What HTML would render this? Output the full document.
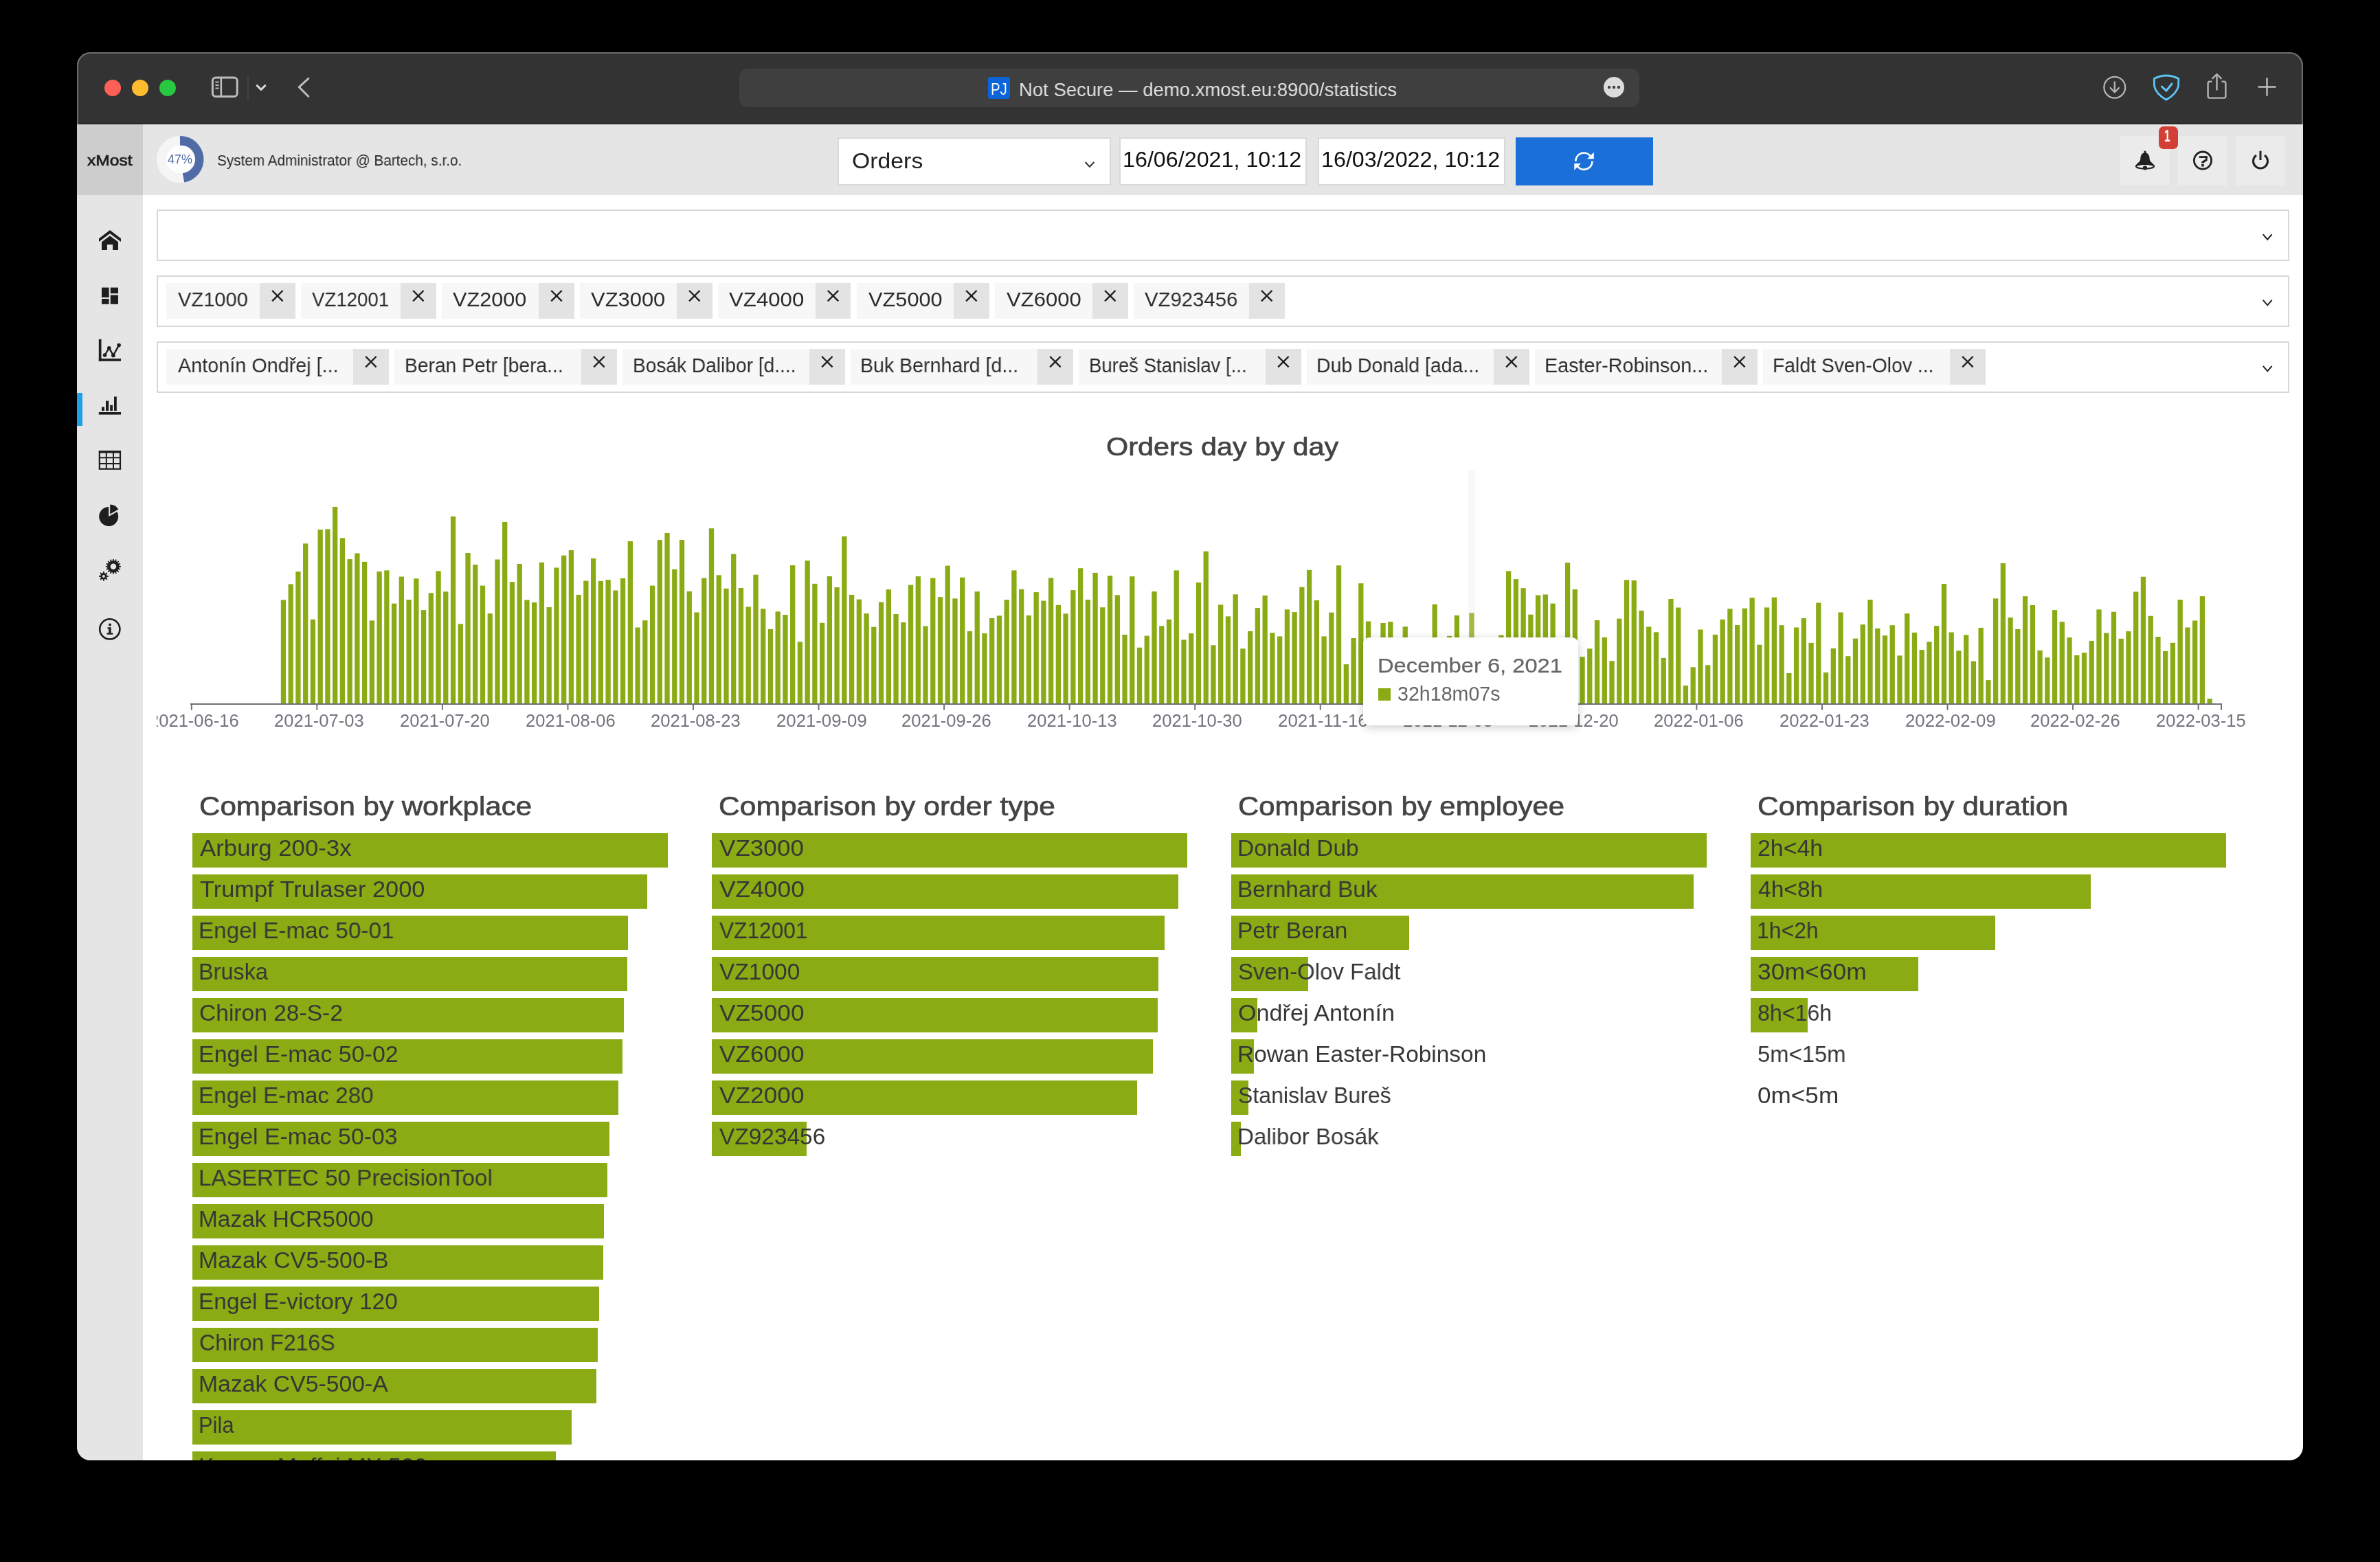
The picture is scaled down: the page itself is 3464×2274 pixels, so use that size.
<!DOCTYPE html><html><head><meta charset="utf-8"><title>xMost statistics</title><style>html,body{margin:0;padding:0;background:#000;width:3464px;height:2274px;overflow:hidden;}#win{position:absolute;left:0;top:0;width:3464px;height:2274px;clip-path:inset(76px 112px 148px 112px round 20px);background:#fff;}.t{position:absolute;white-space:pre;line-height:1;transform-origin:0 0;font-family:"Liberation Sans",sans-serif;-webkit-font-smoothing:antialiased;will-change:transform;}</style></head><body><div id="win"><div style="position:absolute;left:112.00px;top:76.00px;width:3240.00px;height:104.00px;background:#333333;"></div>
<div style="position:absolute;left:112.00px;top:180.00px;width:3240.00px;height:1.00px;background:#0c0c0c;"></div>
<div style="position:absolute;left:112px;top:76px;width:3240px;height:120px;box-sizing:border-box;border:2px solid #6d6d6d;border-bottom:none;border-radius:20px 20px 0 0;"></div>
<svg style="position:absolute;left:0;top:0" width="3464" height="200" viewBox="0 0 3464 200"><circle cx="164" cy="128" r="12" fill="#fe5f57"/><circle cx="204" cy="128" r="12" fill="#febc2e"/><circle cx="244" cy="128" r="12" fill="#28c840"/><rect x="309.4" y="113.1" width="35.8" height="27.4" rx="4.5" ry="4.5" fill="none" stroke="#bdbdbd" stroke-width="3"/><line x1="321.8" y1="113" x2="321.8" y2="141" stroke="#bdbdbd" stroke-width="2.6"/><line x1="313.5" y1="119.5" x2="318.5" y2="119.5" stroke="#bdbdbd" stroke-width="2.2"/><line x1="313.5" y1="124" x2="318.5" y2="124" stroke="#bdbdbd" stroke-width="2.2"/><line x1="313.5" y1="128.5" x2="318.5" y2="128.5" stroke="#bdbdbd" stroke-width="2.2"/><line x1="361" y1="110" x2="361" y2="146" stroke="#484848" stroke-width="1.5"/><polyline points="374.2,124.6 380,130.4 385.8,124.6" fill="none" stroke="#d6d6d6" stroke-width="3" stroke-linecap="round" stroke-linejoin="round"/><polyline points="448.8,114.3 435.2,126.8 448.8,140.2" fill="none" stroke="#bdbdbd" stroke-width="3" stroke-linecap="round" stroke-linejoin="round"/><rect x="1076" y="100" width="1310" height="56" rx="12" ry="12" fill="#3f3f3f"/><rect x="1438" y="112" width="32" height="32" rx="4" ry="4" fill="#0b64d8"/><circle cx="2349" cy="127" r="15" fill="#dcdcdc"/><circle cx="2342" cy="127" r="2.2" fill="#3f3f3f"/><circle cx="2349" cy="127" r="2.2" fill="#3f3f3f"/><circle cx="2356" cy="127" r="2.2" fill="#3f3f3f"/><circle cx="3077.8" cy="127.2" r="15.4" fill="none" stroke="#b4b4b4" stroke-width="2.3"/><line x1="3077.8" y1="119.4" x2="3077.8" y2="134" stroke="#b4b4b4" stroke-width="2.3" stroke-linecap="round"/><polyline points="3071.6,128 3077.8,134.3 3084,128" fill="none" stroke="#b4b4b4" stroke-width="2.3" stroke-linecap="round" stroke-linejoin="round"/><path d="M3135.3 114.5 Q3152.9 105.5 3170.8 114.5 L3170.6 125.5 Q3168 136.5 3152.9 145.3 Q3137.8 136.5 3135.5 125.5 Z" fill="none" stroke="#5cc6f6" stroke-width="2.8" stroke-linejoin="round"/><polyline points="3146.4,126 3152.9,132.2 3161,122" fill="none" stroke="#5cc6f6" stroke-width="3" stroke-linecap="round" stroke-linejoin="round"/><path d="M3219.4 118.8 L3216.2 118.8 Q3213.6 118.8 3213.6 121.4 L3213.6 140 Q3213.6 142.6 3216.2 142.6 L3236.8 142.6 Q3239.4 142.6 3239.4 140 L3239.4 121.4 Q3239.4 118.8 3236.8 118.8 L3233.5 118.8" fill="none" stroke="#b4b4b4" stroke-width="2.4" stroke-linejoin="round"/><line x1="3226.5" y1="108.5" x2="3226.5" y2="130.6" stroke="#b4b4b4" stroke-width="2.4" stroke-linecap="round"/><polyline points="3220.3,114.2 3226.5,108 3232.7,114.2" fill="none" stroke="#b4b4b4" stroke-width="2.4" stroke-linecap="round" stroke-linejoin="round"/><line x1="3287.5" y1="126.5" x2="3311.6" y2="126.5" stroke="#c0c0c0" stroke-width="2.4" stroke-linecap="round"/><line x1="3299.5" y1="114.2" x2="3299.5" y2="138.8" stroke="#c0c0c0" stroke-width="2.4" stroke-linecap="round"/></svg>
<div class="t" style="left:1441.85px;top:117.50px;font-size:24.71px;color:#ffffff;font-weight:400;transform:scaleX(0.8246);">PJ</div>
<div class="t" style="left:1482.54px;top:116.50px;font-size:28.05px;color:#e2e2e2;font-weight:400;transform:scaleX(0.9800);">Not Secure — demo.xmost.eu:8900/statistics</div>
<div style="position:absolute;left:112.00px;top:181.00px;width:3240.00px;height:103.00px;background:#e5e5e5;"></div>
<div style="position:absolute;left:112.00px;top:181.00px;width:96.00px;height:103.00px;background:#cdcdcd;"></div>
<div class="t" style="left:126.50px;top:222.70px;font-size:22.09px;color:#1e1e1e;font-weight:400;-webkit-text-stroke:0.7px #1e1e1e;transform:scaleX(1.1149);">xMost</div>
<svg style="position:absolute;left:0;top:0" width="3464" height="300" viewBox="0 0 3464 300"><circle cx="262" cy="232" r="34.1" fill="#f5f5f5"/><path d="M262 197.9 A34.1 34.1 0 0 1 268.2 265.6 L265.8 252.1 A20.2 20.2 0 0 0 262 211.8 Z" fill="#516ba7"/><circle cx="262" cy="232" r="20.2" fill="#ffffff"/></svg>
<div class="t" style="left:243.50px;top:223.80px;font-size:17.88px;color:#4f69a6;font-weight:400;transform:scaleX(1.0038);">47%</div>
<div class="t" style="left:315.86px;top:222.70px;font-size:22.09px;color:#2a2a2a;font-weight:400;transform:scaleX(0.9391);">System Administrator @ Bartech, s.r.o.</div>
<div style="position:absolute;left:1219.00px;top:200.00px;width:398.00px;height:70.00px;background:#ffffff;box-sizing:border-box;border:2px solid #d9d9d9;"></div>
<div class="t" style="left:1239.95px;top:217.50px;font-size:32.27px;color:#222;font-weight:400;transform:scaleX(1.0473);">Orders</div>
<svg style="position:absolute;left:0;top:0" width="3464" height="300" viewBox="0 0 3464 300"><polyline points="1579.6,236 1586,242.8 1592.4,236" fill="none" stroke="#333" stroke-width="2"/></svg>
<div style="position:absolute;left:1629.00px;top:200.00px;width:273.00px;height:70.00px;background:#ffffff;box-sizing:border-box;border:2px solid #d9d9d9;"></div>
<div style="position:absolute;left:1918.00px;top:200.00px;width:273.00px;height:70.00px;background:#ffffff;box-sizing:border-box;border:2px solid #d9d9d9;"></div>
<div class="t" style="left:1634.39px;top:217.00px;font-size:30.52px;color:#111;font-weight:400;transform:scaleX(1.0573);">16/06/2021, 10:12</div>
<div class="t" style="left:1922.89px;top:217.00px;font-size:30.52px;color:#111;font-weight:400;transform:scaleX(1.0573);">16/03/2022, 10:12</div>
<div style="position:absolute;left:2206.00px;top:200.00px;width:200.00px;height:70.00px;background:#1a6fd8;"></div>
<svg style="position:absolute;left:0;top:0" width="3464" height="300" viewBox="0 0 3464 300"><path d="M2293.3 234.7 A12.1 12.1 0 0 1 2314.67 226.92" fill="none" stroke="#fff" stroke-width="2.7"/><polygon points="2319.8,221.7 2319.8,231.2 2310.1,231.2" fill="#fff"/><path d="M2317.5 234.7 A12.1 12.1 0 0 1 2296.13 242.48" fill="none" stroke="#fff" stroke-width="2.7"/><polygon points="2291.3,238.1 2300.9,238.1 2291.3,247.7" fill="#fff"/></svg>
<div style="position:absolute;left:3086.00px;top:198.00px;width:72.00px;height:72.00px;background:#ebebeb;"></div>
<div style="position:absolute;left:3170.00px;top:198.00px;width:72.00px;height:72.00px;background:#ebebeb;"></div>
<div style="position:absolute;left:3254.00px;top:198.00px;width:72.00px;height:72.00px;background:#ebebeb;"></div>
<svg style="position:absolute;left:0;top:0" width="3464" height="300" viewBox="0 0 3464 300"><circle cx="3122" cy="221.4" r="1.8" fill="#222"/><path d="M3115.3 232 C3115.3 225.5 3118 222.6 3122 222.6 C3126 222.6 3128.7 225.5 3128.7 232 C3129 234.5 3131 236 3133.5 238.5 C3135.5 240.3 3136.2 241.5 3136 243 L3108 243 C3107.8 241.5 3108.5 240.3 3110.5 238.5 C3113 236 3115 234.5 3115.3 232 Z" fill="#222"/><ellipse cx="3122" cy="242.3" rx="13" ry="3.2" fill="#f2f2f2" stroke="#222" stroke-width="2"/><circle cx="3122" cy="244.3" r="3.1" fill="#222"/><circle cx="3206" cy="233.6" r="12.6" fill="none" stroke="#222" stroke-width="2.8"/><rect x="3200.8" y="227.2" width="11.9" height="2.8" fill="#222"/><rect x="3210.1" y="227.2" width="2.6" height="6.4" fill="#222"/><polygon points="3210.3,231.6 3212.7,233.7 3207.8,236.9 3207.8,237.6 3204.2,237.6 3204.2,235.6" fill="#222"/><rect x="3204.2" y="239" width="3.5" height="3.5" fill="#222"/><path d="M3284 226 A10.5 10.5 0 1 0 3296 226" fill="none" stroke="#222" stroke-width="3"/><line x1="3290" y1="219.7" x2="3290" y2="233" stroke="#222" stroke-width="3"/></svg>
<div style="position:absolute;left:3142px;top:183.5px;width:28px;height:33px;background:#d23f35;border-radius:7px;"></div>
<div class="t" style="left:3150.33px;top:187.00px;font-size:23.26px;color:#ffffff;font-weight:700;transform:scaleX(0.6667);">1</div>
<div style="position:absolute;left:112.00px;top:284.00px;width:96.00px;height:1842.00px;background:#e5e5e5;"></div>
<div style="position:absolute;left:112.00px;top:572.00px;width:8.00px;height:48.00px;background:#1ea1e4;"></div>
<svg style="position:absolute;left:0;top:0" width="300" height="1000" viewBox="0 0 300 1000"><polygon points="144,347.2 160,335.1 176,347.2 176,351.9 160,340 144,351.9" fill="#1e1e1e"/><polygon points="148,352.2 160,343.2 172,352.2 172,363.9 164.1,363.9 164.1,355.9 155.9,355.9 155.9,363.9 148,363.9" fill="#1e1e1e"/><rect x="148" y="418.6" width="10.6" height="14.4" fill="#1e1e1e"/><rect x="148" y="435" width="10.6" height="7.8" fill="#1e1e1e"/><rect x="160.8" y="418.6" width="11.2" height="8.6" fill="#1e1e1e"/><rect x="160.8" y="429.6" width="11.2" height="13.2" fill="#1e1e1e"/><rect x="143.8" y="493.8" width="3.7" height="32" fill="#1e1e1e"/><rect x="143.8" y="522.1" width="32.2" height="3.7" fill="#1e1e1e"/><polyline points="152.6,517 158.8,506.7 164.9,517.4 173.1,502.6" fill="none" stroke="#1e1e1e" stroke-width="2.4"/><circle cx="152.6" cy="517" r="2.8" fill="#1e1e1e"/><circle cx="158.8" cy="506.7" r="2.8" fill="#1e1e1e"/><circle cx="164.9" cy="517.4" r="2.8" fill="#1e1e1e"/><circle cx="173.1" cy="502.6" r="2.8" fill="#1e1e1e"/><rect x="143.8" y="600" width="32.2" height="3.6" fill="#1e1e1e"/><rect x="148" y="592.4" width="4" height="5.6" fill="#1e1e1e"/><rect x="154" y="583.6" width="4.2" height="14.4" fill="#1e1e1e"/><rect x="160.2" y="589.7" width="3.8" height="8.3" fill="#1e1e1e"/><rect x="166" y="577.4" width="3.8" height="20.6" fill="#1e1e1e"/><rect x="144.8" y="657.5" width="30.2" height="25.2" fill="none" stroke="#1e1e1e" stroke-width="2.2"/><rect x="143.8" y="656" width="32.2" height="3.6" fill="#1e1e1e"/><line x1="154.8" y1="657" x2="154.8" y2="683" stroke="#1e1e1e" stroke-width="2"/><line x1="165" y1="657" x2="165" y2="683" stroke="#1e1e1e" stroke-width="2"/><line x1="144" y1="666.3" x2="176" y2="666.3" stroke="#1e1e1e" stroke-width="2"/><line x1="144" y1="675" x2="176" y2="675" stroke="#1e1e1e" stroke-width="2"/><path d="M158.2,752 L158.2,738 A14 14 0 1 0 170.32,745.00 Z" fill="#1e1e1e"/><path d="M160.2,748.4 L160.2,734.4 A14 14 0 0 1 172.32,741.40 Z" fill="#1e1e1e"/><circle cx="164.9" cy="824.8" r="8.9" fill="#1e1e1e"/><rect x="164.05" y="813.80" width="1.7" height="3.30" fill="#1e1e1e" transform="rotate(0.00 164.9 824.8)"/><rect x="164.05" y="813.80" width="1.7" height="3.30" fill="#1e1e1e" transform="rotate(22.50 164.9 824.8)"/><rect x="164.05" y="813.80" width="1.7" height="3.30" fill="#1e1e1e" transform="rotate(45.00 164.9 824.8)"/><rect x="164.05" y="813.80" width="1.7" height="3.30" fill="#1e1e1e" transform="rotate(67.50 164.9 824.8)"/><rect x="164.05" y="813.80" width="1.7" height="3.30" fill="#1e1e1e" transform="rotate(90.00 164.9 824.8)"/><rect x="164.05" y="813.80" width="1.7" height="3.30" fill="#1e1e1e" transform="rotate(112.50 164.9 824.8)"/><rect x="164.05" y="813.80" width="1.7" height="3.30" fill="#1e1e1e" transform="rotate(135.00 164.9 824.8)"/><rect x="164.05" y="813.80" width="1.7" height="3.30" fill="#1e1e1e" transform="rotate(157.50 164.9 824.8)"/><rect x="164.05" y="813.80" width="1.7" height="3.30" fill="#1e1e1e" transform="rotate(180.00 164.9 824.8)"/><rect x="164.05" y="813.80" width="1.7" height="3.30" fill="#1e1e1e" transform="rotate(202.50 164.9 824.8)"/><rect x="164.05" y="813.80" width="1.7" height="3.30" fill="#1e1e1e" transform="rotate(225.00 164.9 824.8)"/><rect x="164.05" y="813.80" width="1.7" height="3.30" fill="#1e1e1e" transform="rotate(247.50 164.9 824.8)"/><rect x="164.05" y="813.80" width="1.7" height="3.30" fill="#1e1e1e" transform="rotate(270.00 164.9 824.8)"/><rect x="164.05" y="813.80" width="1.7" height="3.30" fill="#1e1e1e" transform="rotate(292.50 164.9 824.8)"/><rect x="164.05" y="813.80" width="1.7" height="3.30" fill="#1e1e1e" transform="rotate(315.00 164.9 824.8)"/><rect x="164.05" y="813.80" width="1.7" height="3.30" fill="#1e1e1e" transform="rotate(337.50 164.9 824.8)"/><circle cx="164.9" cy="824.8" r="4.3" fill="#e5e5e5"/><circle cx="150.9" cy="838.9" r="4.7" fill="#1e1e1e"/><rect x="149.95" y="832.00" width="1.9" height="3.40" fill="#1e1e1e" transform="rotate(0.00 150.9 838.9)"/><rect x="149.95" y="832.00" width="1.9" height="3.40" fill="#1e1e1e" transform="rotate(45.00 150.9 838.9)"/><rect x="149.95" y="832.00" width="1.9" height="3.40" fill="#1e1e1e" transform="rotate(90.00 150.9 838.9)"/><rect x="149.95" y="832.00" width="1.9" height="3.40" fill="#1e1e1e" transform="rotate(135.00 150.9 838.9)"/><rect x="149.95" y="832.00" width="1.9" height="3.40" fill="#1e1e1e" transform="rotate(180.00 150.9 838.9)"/><rect x="149.95" y="832.00" width="1.9" height="3.40" fill="#1e1e1e" transform="rotate(225.00 150.9 838.9)"/><rect x="149.95" y="832.00" width="1.9" height="3.40" fill="#1e1e1e" transform="rotate(270.00 150.9 838.9)"/><rect x="149.95" y="832.00" width="1.9" height="3.40" fill="#1e1e1e" transform="rotate(315.00 150.9 838.9)"/><circle cx="150.9" cy="838.9" r="2.0" fill="#e5e5e5"/><circle cx="159.8" cy="915.9" r="14.6" fill="none" stroke="#1e1e1e" stroke-width="2.6"/><circle cx="160" cy="909.4" r="2" fill="#1e1e1e"/><path d="M156.5 913.3 L161.7 913.3 L161.7 921.5 L164.3 921.5 L164.3 923.8 L155.5 923.8 L155.5 921.5 L158.2 921.5 L158.2 915.5 L156.5 915.5 Z" fill="#1e1e1e"/></svg>
<div style="position:absolute;left:228px;top:304.5px;width:3104px;height:75.0px;box-sizing:border-box;border:2px solid #d8d8d8;background:#fff"></div>
<div style="position:absolute;left:228px;top:400.5px;width:3104px;height:75.0px;box-sizing:border-box;border:2px solid #d8d8d8;background:#fff"></div>
<div style="position:absolute;left:228px;top:496.5px;width:3104px;height:75.0px;box-sizing:border-box;border:2px solid #d8d8d8;background:#fff"></div>
<svg style="position:absolute;left:0;top:0" width="3464" height="600" viewBox="0 0 3464 600"><polyline points="3293.8,341.2 3300.2,348.6 3306.6,341.2" fill="none" stroke="#1e1e1e" stroke-width="2"/><polyline points="3293.8,436.9 3300.2,444.3 3306.6,436.9" fill="none" stroke="#1e1e1e" stroke-width="2"/><polyline points="3293.8,532.9000000000001 3300.2,540.3000000000001 3306.6,532.9000000000001" fill="none" stroke="#1e1e1e" stroke-width="2"/></svg>
<div style="position:absolute;left:242.00px;top:412.40px;width:136.00px;height:51.40px;background:#f7f7f7;"></div>
<div style="position:absolute;left:378.00px;top:412.40px;width:51.70px;height:51.40px;background:#e3e3e3;"></div>
<div class="t" style="left:258.80px;top:421.00px;font-size:29.65px;color:#2c2c2c;font-weight:400;transform:scaleX(0.9823);">VZ1000</div>
<div style="position:absolute;left:438.00px;top:412.40px;width:145.00px;height:51.40px;background:#f7f7f7;"></div>
<div style="position:absolute;left:583.00px;top:412.40px;width:51.70px;height:51.40px;background:#e3e3e3;"></div>
<div class="t" style="left:454.40px;top:421.00px;font-size:29.65px;color:#2c2c2c;font-weight:400;transform:scaleX(0.9331);">VZ12001</div>
<div style="position:absolute;left:643.00px;top:412.40px;width:141.00px;height:51.40px;background:#f7f7f7;"></div>
<div style="position:absolute;left:784.00px;top:412.40px;width:52.00px;height:51.40px;background:#e3e3e3;"></div>
<div class="t" style="left:659.40px;top:421.00px;font-size:29.65px;color:#2c2c2c;font-weight:400;transform:scaleX(1.0336);">VZ2000</div>
<div style="position:absolute;left:844.00px;top:412.40px;width:141.00px;height:51.40px;background:#f7f7f7;"></div>
<div style="position:absolute;left:985.00px;top:412.40px;width:51.60px;height:51.40px;background:#e3e3e3;"></div>
<div class="t" style="left:860.00px;top:421.00px;font-size:29.65px;color:#2c2c2c;font-weight:400;transform:scaleX(1.0433);">VZ3000</div>
<div style="position:absolute;left:1045.00px;top:412.40px;width:142.00px;height:51.40px;background:#f7f7f7;"></div>
<div style="position:absolute;left:1187.00px;top:412.40px;width:51.00px;height:51.40px;background:#e3e3e3;"></div>
<div class="t" style="left:1061.00px;top:421.00px;font-size:29.65px;color:#2c2c2c;font-weight:400;transform:scaleX(1.0529);">VZ4000</div>
<div style="position:absolute;left:1247.00px;top:412.40px;width:141.00px;height:51.40px;background:#f7f7f7;"></div>
<div style="position:absolute;left:1388.00px;top:412.40px;width:51.70px;height:51.40px;background:#e3e3e3;"></div>
<div class="t" style="left:1263.60px;top:421.00px;font-size:29.65px;color:#2c2c2c;font-weight:400;transform:scaleX(1.0375);">VZ5000</div>
<div style="position:absolute;left:1448.00px;top:412.40px;width:142.00px;height:51.40px;background:#f7f7f7;"></div>
<div style="position:absolute;left:1590.00px;top:412.40px;width:51.60px;height:51.40px;background:#e3e3e3;"></div>
<div class="t" style="left:1464.60px;top:421.00px;font-size:29.65px;color:#2c2c2c;font-weight:400;transform:scaleX(1.0471);">VZ6000</div>
<div style="position:absolute;left:1650.00px;top:412.40px;width:168.00px;height:51.40px;background:#f7f7f7;"></div>
<div style="position:absolute;left:1818.00px;top:412.40px;width:51.50px;height:51.40px;background:#e3e3e3;"></div>
<div class="t" style="left:1665.70px;top:421.00px;font-size:29.65px;color:#2c2c2c;font-weight:400;transform:scaleX(0.9897);">VZ923456</div>
<div style="position:absolute;left:242.00px;top:508.40px;width:272.00px;height:51.40px;background:#f7f7f7;"></div>
<div style="position:absolute;left:514.00px;top:508.40px;width:51.70px;height:51.40px;background:#e3e3e3;"></div>
<div class="t" style="left:258.80px;top:517.00px;font-size:29.65px;color:#2c2c2c;font-weight:400;transform:scaleX(0.9714);">Antonín Ondřej [...</div>
<div style="position:absolute;left:574.00px;top:508.40px;width:272.00px;height:51.40px;background:#f7f7f7;"></div>
<div style="position:absolute;left:846.00px;top:508.40px;width:51.70px;height:51.40px;background:#e3e3e3;"></div>
<div class="t" style="left:589.10px;top:517.00px;font-size:29.65px;color:#2c2c2c;font-weight:400;transform:scaleX(0.9523);">Beran Petr [bera...</div>
<div style="position:absolute;left:906.00px;top:508.40px;width:272.00px;height:51.40px;background:#f7f7f7;"></div>
<div style="position:absolute;left:1178.00px;top:508.40px;width:51.70px;height:51.40px;background:#e3e3e3;"></div>
<div class="t" style="left:920.60px;top:517.00px;font-size:29.65px;color:#2c2c2c;font-weight:400;transform:scaleX(0.9481);">Bosák Dalibor [d....</div>
<div style="position:absolute;left:1238.00px;top:508.40px;width:272.00px;height:51.40px;background:#f7f7f7;"></div>
<div style="position:absolute;left:1510.00px;top:508.40px;width:51.70px;height:51.40px;background:#e3e3e3;"></div>
<div class="t" style="left:1252.37px;top:517.00px;font-size:29.65px;color:#2c2c2c;font-weight:400;transform:scaleX(0.9631);">Buk Bernhard [d...</div>
<div style="position:absolute;left:1570.00px;top:508.40px;width:272.00px;height:51.40px;background:#f7f7f7;"></div>
<div style="position:absolute;left:1842.00px;top:508.40px;width:51.70px;height:51.40px;background:#e3e3e3;"></div>
<div class="t" style="left:1584.74px;top:517.00px;font-size:29.65px;color:#2c2c2c;font-weight:400;transform:scaleX(0.9289);">Bureš Stanislav [...</div>
<div style="position:absolute;left:1902.00px;top:508.40px;width:272.00px;height:51.40px;background:#f7f7f7;"></div>
<div style="position:absolute;left:2174.00px;top:508.40px;width:51.70px;height:51.40px;background:#e3e3e3;"></div>
<div class="t" style="left:1915.98px;top:517.00px;font-size:29.65px;color:#2c2c2c;font-weight:400;transform:scaleX(0.9587);">Dub Donald [ada...</div>
<div style="position:absolute;left:2234.00px;top:508.40px;width:272.00px;height:51.40px;background:#f7f7f7;"></div>
<div style="position:absolute;left:2506.00px;top:508.40px;width:51.70px;height:51.40px;background:#e3e3e3;"></div>
<div class="t" style="left:2248.46px;top:517.00px;font-size:29.65px;color:#2c2c2c;font-weight:400;transform:scaleX(0.9704);">Easter-Robinson...</div>
<div style="position:absolute;left:2566.00px;top:508.40px;width:272.00px;height:51.40px;background:#f7f7f7;"></div>
<div style="position:absolute;left:2838.00px;top:508.40px;width:51.70px;height:51.40px;background:#e3e3e3;"></div>
<div class="t" style="left:2580.29px;top:517.00px;font-size:29.65px;color:#2c2c2c;font-weight:400;transform:scaleX(0.9552);">Faldt Sven-Olov ...</div>
<svg style="position:absolute;left:0;top:0" width="3464" height="600" viewBox="0 0 3464 600"><line x1="396.15000000000003" y1="423.0" x2="411.55" y2="438.4" stroke="#1e1e1e" stroke-width="2.4"/><line x1="396.15000000000003" y1="438.4" x2="411.55" y2="423.0" stroke="#1e1e1e" stroke-width="2.4"/><line x1="601.15" y1="423.0" x2="616.5500000000001" y2="438.4" stroke="#1e1e1e" stroke-width="2.4"/><line x1="601.15" y1="438.4" x2="616.5500000000001" y2="423.0" stroke="#1e1e1e" stroke-width="2.4"/><line x1="802.3" y1="423.0" x2="817.7" y2="438.4" stroke="#1e1e1e" stroke-width="2.4"/><line x1="802.3" y1="438.4" x2="817.7" y2="423.0" stroke="#1e1e1e" stroke-width="2.4"/><line x1="1003.0999999999999" y1="423.0" x2="1018.5" y2="438.4" stroke="#1e1e1e" stroke-width="2.4"/><line x1="1003.0999999999999" y1="438.4" x2="1018.5" y2="423.0" stroke="#1e1e1e" stroke-width="2.4"/><line x1="1204.8" y1="423.0" x2="1220.2" y2="438.4" stroke="#1e1e1e" stroke-width="2.4"/><line x1="1204.8" y1="438.4" x2="1220.2" y2="423.0" stroke="#1e1e1e" stroke-width="2.4"/><line x1="1406.1499999999999" y1="423.0" x2="1421.55" y2="438.4" stroke="#1e1e1e" stroke-width="2.4"/><line x1="1406.1499999999999" y1="438.4" x2="1421.55" y2="423.0" stroke="#1e1e1e" stroke-width="2.4"/><line x1="1608.1" y1="423.0" x2="1623.5" y2="438.4" stroke="#1e1e1e" stroke-width="2.4"/><line x1="1608.1" y1="438.4" x2="1623.5" y2="423.0" stroke="#1e1e1e" stroke-width="2.4"/><line x1="1836.05" y1="423.0" x2="1851.45" y2="438.4" stroke="#1e1e1e" stroke-width="2.4"/><line x1="1836.05" y1="438.4" x2="1851.45" y2="423.0" stroke="#1e1e1e" stroke-width="2.4"/><line x1="532.1999999999999" y1="519.0" x2="547.6" y2="534.4000000000001" stroke="#1e1e1e" stroke-width="2.4"/><line x1="532.1999999999999" y1="534.4000000000001" x2="547.6" y2="519.0" stroke="#1e1e1e" stroke-width="2.4"/><line x1="864.1999999999999" y1="519.0" x2="879.6" y2="534.4000000000001" stroke="#1e1e1e" stroke-width="2.4"/><line x1="864.1999999999999" y1="534.4000000000001" x2="879.6" y2="519.0" stroke="#1e1e1e" stroke-width="2.4"/><line x1="1196.2" y1="519.0" x2="1211.6000000000001" y2="534.4000000000001" stroke="#1e1e1e" stroke-width="2.4"/><line x1="1196.2" y1="534.4000000000001" x2="1211.6000000000001" y2="519.0" stroke="#1e1e1e" stroke-width="2.4"/><line x1="1528.2" y1="519.0" x2="1543.6000000000001" y2="534.4000000000001" stroke="#1e1e1e" stroke-width="2.4"/><line x1="1528.2" y1="534.4000000000001" x2="1543.6000000000001" y2="519.0" stroke="#1e1e1e" stroke-width="2.4"/><line x1="1860.2" y1="519.0" x2="1875.6000000000001" y2="534.4000000000001" stroke="#1e1e1e" stroke-width="2.4"/><line x1="1860.2" y1="534.4000000000001" x2="1875.6000000000001" y2="519.0" stroke="#1e1e1e" stroke-width="2.4"/><line x1="2192.2000000000003" y1="519.0" x2="2207.6" y2="534.4000000000001" stroke="#1e1e1e" stroke-width="2.4"/><line x1="2192.2000000000003" y1="534.4000000000001" x2="2207.6" y2="519.0" stroke="#1e1e1e" stroke-width="2.4"/><line x1="2524.2000000000003" y1="519.0" x2="2539.6" y2="534.4000000000001" stroke="#1e1e1e" stroke-width="2.4"/><line x1="2524.2000000000003" y1="534.4000000000001" x2="2539.6" y2="519.0" stroke="#1e1e1e" stroke-width="2.4"/><line x1="2856.2000000000003" y1="519.0" x2="2871.6" y2="534.4000000000001" stroke="#1e1e1e" stroke-width="2.4"/><line x1="2856.2000000000003" y1="534.4000000000001" x2="2871.6" y2="519.0" stroke="#1e1e1e" stroke-width="2.4"/></svg>
<div class="t" style="left:1610.30px;top:631.80px;font-size:37.65px;color:#444;font-weight:400;-webkit-text-stroke:0.7px #444;transform:scaleX(1.0998);">Orders day by day</div>
<div style="position:absolute;left:2137.00px;top:684.00px;width:10.00px;height:340.00px;background:rgba(150,150,150,0.07);"></div>
<svg style="position:absolute;left:0;top:0" width="3464" height="1100" viewBox="0 0 3464 1100"><rect x="408.82" y="873.4" width="7.3" height="150.6" fill="#8aab13"/><rect x="419.56" y="850.4" width="7.3" height="173.6" fill="#8aab13"/><rect x="430.30" y="832.1" width="7.3" height="191.9" fill="#8aab13"/><rect x="441.05" y="791.3" width="7.3" height="232.7" fill="#8aab13"/><rect x="451.79" y="901.8" width="7.3" height="122.2" fill="#8aab13"/><rect x="462.53" y="771.0" width="7.3" height="253.0" fill="#8aab13"/><rect x="473.27" y="770.4" width="7.3" height="253.6" fill="#8aab13"/><rect x="484.01" y="737.9" width="7.3" height="286.1" fill="#8aab13"/><rect x="494.76" y="783.3" width="7.3" height="240.7" fill="#8aab13"/><rect x="505.50" y="814.1" width="7.3" height="209.9" fill="#8aab13"/><rect x="516.24" y="805.5" width="7.3" height="218.5" fill="#8aab13"/><rect x="526.98" y="817.9" width="7.3" height="206.1" fill="#8aab13"/><rect x="537.72" y="903.4" width="7.3" height="120.6" fill="#8aab13"/><rect x="548.47" y="832.1" width="7.3" height="191.9" fill="#8aab13"/><rect x="559.21" y="830.4" width="7.3" height="193.6" fill="#8aab13"/><rect x="569.95" y="878.6" width="7.3" height="145.4" fill="#8aab13"/><rect x="580.69" y="839.5" width="7.3" height="184.5" fill="#8aab13"/><rect x="591.43" y="873.0" width="7.3" height="151.0" fill="#8aab13"/><rect x="602.18" y="842.3" width="7.3" height="181.7" fill="#8aab13"/><rect x="612.92" y="888.1" width="7.3" height="135.9" fill="#8aab13"/><rect x="623.66" y="863.3" width="7.3" height="160.7" fill="#8aab13"/><rect x="634.40" y="831.4" width="7.3" height="192.6" fill="#8aab13"/><rect x="645.14" y="861.3" width="7.3" height="162.7" fill="#8aab13"/><rect x="655.89" y="751.8" width="7.3" height="272.2" fill="#8aab13"/><rect x="666.63" y="908.4" width="7.3" height="115.6" fill="#8aab13"/><rect x="677.37" y="805.0" width="7.3" height="219.0" fill="#8aab13"/><rect x="688.11" y="822.0" width="7.3" height="202.0" fill="#8aab13"/><rect x="698.85" y="852.6" width="7.3" height="171.4" fill="#8aab13"/><rect x="709.60" y="893.1" width="7.3" height="130.9" fill="#8aab13"/><rect x="720.34" y="814.5" width="7.3" height="209.5" fill="#8aab13"/><rect x="731.08" y="759.9" width="7.3" height="264.1" fill="#8aab13"/><rect x="741.82" y="847.2" width="7.3" height="176.8" fill="#8aab13"/><rect x="752.56" y="821.0" width="7.3" height="203.0" fill="#8aab13"/><rect x="763.31" y="873.4" width="7.3" height="150.6" fill="#8aab13"/><rect x="774.05" y="877.0" width="7.3" height="147.0" fill="#8aab13"/><rect x="784.79" y="818.8" width="7.3" height="205.2" fill="#8aab13"/><rect x="795.53" y="884.0" width="7.3" height="140.0" fill="#8aab13"/><rect x="806.27" y="826.4" width="7.3" height="197.6" fill="#8aab13"/><rect x="817.02" y="808.7" width="7.3" height="215.3" fill="#8aab13"/><rect x="827.76" y="801.0" width="7.3" height="223.0" fill="#8aab13"/><rect x="838.50" y="865.9" width="7.3" height="158.1" fill="#8aab13"/><rect x="849.24" y="845.6" width="7.3" height="178.4" fill="#8aab13"/><rect x="859.98" y="812.9" width="7.3" height="211.1" fill="#8aab13"/><rect x="870.73" y="845.8" width="7.3" height="178.2" fill="#8aab13"/><rect x="881.47" y="844.1" width="7.3" height="179.9" fill="#8aab13"/><rect x="892.21" y="859.5" width="7.3" height="164.5" fill="#8aab13"/><rect x="902.95" y="841.9" width="7.3" height="182.1" fill="#8aab13"/><rect x="913.69" y="787.9" width="7.3" height="236.1" fill="#8aab13"/><rect x="924.44" y="913.5" width="7.3" height="110.5" fill="#8aab13"/><rect x="935.18" y="903.2" width="7.3" height="120.8" fill="#8aab13"/><rect x="945.92" y="852.6" width="7.3" height="171.4" fill="#8aab13"/><rect x="956.66" y="786.1" width="7.3" height="237.9" fill="#8aab13"/><rect x="967.40" y="776.0" width="7.3" height="248.0" fill="#8aab13"/><rect x="978.15" y="828.8" width="7.3" height="195.2" fill="#8aab13"/><rect x="988.89" y="786.1" width="7.3" height="237.9" fill="#8aab13"/><rect x="999.63" y="860.9" width="7.3" height="163.1" fill="#8aab13"/><rect x="1010.37" y="891.5" width="7.3" height="132.5" fill="#8aab13"/><rect x="1021.11" y="841.5" width="7.3" height="182.5" fill="#8aab13"/><rect x="1031.86" y="769.2" width="7.3" height="254.8" fill="#8aab13"/><rect x="1042.60" y="837.3" width="7.3" height="186.7" fill="#8aab13"/><rect x="1053.34" y="856.8" width="7.3" height="167.2" fill="#8aab13"/><rect x="1064.08" y="806.5" width="7.3" height="217.5" fill="#8aab13"/><rect x="1074.82" y="856.0" width="7.3" height="168.0" fill="#8aab13"/><rect x="1085.57" y="883.4" width="7.3" height="140.6" fill="#8aab13"/><rect x="1096.31" y="836.7" width="7.3" height="187.3" fill="#8aab13"/><rect x="1107.05" y="886.3" width="7.3" height="137.7" fill="#8aab13"/><rect x="1117.79" y="915.9" width="7.3" height="108.1" fill="#8aab13"/><rect x="1128.53" y="890.3" width="7.3" height="133.7" fill="#8aab13"/><rect x="1139.28" y="895.1" width="7.3" height="128.9" fill="#8aab13"/><rect x="1150.02" y="823.0" width="7.3" height="201.0" fill="#8aab13"/><rect x="1160.76" y="934.4" width="7.3" height="89.6" fill="#8aab13"/><rect x="1171.50" y="816.1" width="7.3" height="207.9" fill="#8aab13"/><rect x="1182.24" y="849.8" width="7.3" height="174.2" fill="#8aab13"/><rect x="1192.99" y="906.8" width="7.3" height="117.2" fill="#8aab13"/><rect x="1203.73" y="838.9" width="7.3" height="185.1" fill="#8aab13"/><rect x="1214.47" y="855.0" width="7.3" height="169.0" fill="#8aab13"/><rect x="1225.21" y="780.7" width="7.3" height="243.3" fill="#8aab13"/><rect x="1235.95" y="865.9" width="7.3" height="158.1" fill="#8aab13"/><rect x="1246.70" y="872.6" width="7.3" height="151.4" fill="#8aab13"/><rect x="1257.44" y="893.1" width="7.3" height="130.9" fill="#8aab13"/><rect x="1268.18" y="912.7" width="7.3" height="111.3" fill="#8aab13"/><rect x="1278.92" y="876.6" width="7.3" height="147.4" fill="#8aab13"/><rect x="1289.66" y="858.2" width="7.3" height="165.8" fill="#8aab13"/><rect x="1300.41" y="893.9" width="7.3" height="130.1" fill="#8aab13"/><rect x="1311.15" y="906.0" width="7.3" height="118.0" fill="#8aab13"/><rect x="1321.89" y="851.6" width="7.3" height="172.4" fill="#8aab13"/><rect x="1332.63" y="839.1" width="7.3" height="184.9" fill="#8aab13"/><rect x="1343.37" y="911.5" width="7.3" height="112.5" fill="#8aab13"/><rect x="1354.12" y="841.5" width="7.3" height="182.5" fill="#8aab13"/><rect x="1364.86" y="869.1" width="7.3" height="154.9" fill="#8aab13"/><rect x="1375.60" y="823.6" width="7.3" height="200.4" fill="#8aab13"/><rect x="1386.34" y="871.3" width="7.3" height="152.7" fill="#8aab13"/><rect x="1397.08" y="840.7" width="7.3" height="183.3" fill="#8aab13"/><rect x="1407.83" y="918.9" width="7.3" height="105.1" fill="#8aab13"/><rect x="1418.57" y="861.1" width="7.3" height="162.9" fill="#8aab13"/><rect x="1429.31" y="922.1" width="7.3" height="101.9" fill="#8aab13"/><rect x="1440.05" y="900.0" width="7.3" height="124.0" fill="#8aab13"/><rect x="1450.79" y="896.3" width="7.3" height="127.7" fill="#8aab13"/><rect x="1461.54" y="873.2" width="7.3" height="150.8" fill="#8aab13"/><rect x="1472.28" y="830.4" width="7.3" height="193.6" fill="#8aab13"/><rect x="1483.02" y="857.8" width="7.3" height="166.2" fill="#8aab13"/><rect x="1493.76" y="895.9" width="7.3" height="128.1" fill="#8aab13"/><rect x="1504.50" y="862.1" width="7.3" height="161.9" fill="#8aab13"/><rect x="1515.25" y="874.6" width="7.3" height="149.4" fill="#8aab13"/><rect x="1525.99" y="841.3" width="7.3" height="182.7" fill="#8aab13"/><rect x="1536.73" y="880.8" width="7.3" height="143.2" fill="#8aab13"/><rect x="1547.47" y="893.3" width="7.3" height="130.7" fill="#8aab13"/><rect x="1558.21" y="859.1" width="7.3" height="164.9" fill="#8aab13"/><rect x="1568.96" y="827.2" width="7.3" height="196.8" fill="#8aab13"/><rect x="1579.70" y="873.0" width="7.3" height="151.0" fill="#8aab13"/><rect x="1590.44" y="833.9" width="7.3" height="190.1" fill="#8aab13"/><rect x="1601.18" y="884.2" width="7.3" height="139.8" fill="#8aab13"/><rect x="1611.92" y="838.1" width="7.3" height="185.9" fill="#8aab13"/><rect x="1622.67" y="866.3" width="7.3" height="157.7" fill="#8aab13"/><rect x="1633.41" y="924.0" width="7.3" height="100.0" fill="#8aab13"/><rect x="1644.15" y="839.1" width="7.3" height="184.9" fill="#8aab13"/><rect x="1654.89" y="942.7" width="7.3" height="81.3" fill="#8aab13"/><rect x="1665.63" y="925.6" width="7.3" height="98.4" fill="#8aab13"/><rect x="1676.38" y="861.1" width="7.3" height="162.9" fill="#8aab13"/><rect x="1687.12" y="911.3" width="7.3" height="112.7" fill="#8aab13"/><rect x="1697.86" y="901.8" width="7.3" height="122.2" fill="#8aab13"/><rect x="1708.60" y="830.4" width="7.3" height="193.6" fill="#8aab13"/><rect x="1719.34" y="931.4" width="7.3" height="92.6" fill="#8aab13"/><rect x="1730.09" y="922.1" width="7.3" height="101.9" fill="#8aab13"/><rect x="1740.83" y="848.0" width="7.3" height="176.0" fill="#8aab13"/><rect x="1751.57" y="802.6" width="7.3" height="221.4" fill="#8aab13"/><rect x="1762.31" y="939.3" width="7.3" height="84.7" fill="#8aab13"/><rect x="1773.05" y="880.4" width="7.3" height="143.6" fill="#8aab13"/><rect x="1783.80" y="897.3" width="7.3" height="126.7" fill="#8aab13"/><rect x="1794.54" y="865.3" width="7.3" height="158.7" fill="#8aab13"/><rect x="1805.28" y="944.3" width="7.3" height="79.7" fill="#8aab13"/><rect x="1816.02" y="918.9" width="7.3" height="105.1" fill="#8aab13"/><rect x="1826.76" y="885.1" width="7.3" height="138.9" fill="#8aab13"/><rect x="1837.51" y="866.9" width="7.3" height="157.1" fill="#8aab13"/><rect x="1848.25" y="921.3" width="7.3" height="102.7" fill="#8aab13"/><rect x="1858.99" y="926.4" width="7.3" height="97.6" fill="#8aab13"/><rect x="1869.73" y="887.3" width="7.3" height="136.7" fill="#8aab13"/><rect x="1880.47" y="891.1" width="7.3" height="132.9" fill="#8aab13"/><rect x="1891.22" y="854.6" width="7.3" height="169.4" fill="#8aab13"/><rect x="1901.96" y="829.8" width="7.3" height="194.2" fill="#8aab13"/><rect x="1912.70" y="874.0" width="7.3" height="150.0" fill="#8aab13"/><rect x="1923.44" y="926.4" width="7.3" height="97.6" fill="#8aab13"/><rect x="1934.18" y="891.7" width="7.3" height="132.3" fill="#8aab13"/><rect x="1944.93" y="823.2" width="7.3" height="200.8" fill="#8aab13"/><rect x="1955.67" y="967.1" width="7.3" height="56.9" fill="#8aab13"/><rect x="1966.41" y="929.0" width="7.3" height="95.0" fill="#8aab13"/><rect x="1977.15" y="849.2" width="7.3" height="174.8" fill="#8aab13"/><rect x="1987.89" y="904.6" width="7.3" height="119.4" fill="#8aab13"/><rect x="1998.64" y="975.0" width="7.3" height="49.0" fill="#8aab13"/><rect x="2009.38" y="907.0" width="7.3" height="117.0" fill="#8aab13"/><rect x="2020.12" y="905.2" width="7.3" height="118.8" fill="#8aab13"/><rect x="2030.86" y="975.0" width="7.3" height="49.0" fill="#8aab13"/><rect x="2041.60" y="912.3" width="7.3" height="111.7" fill="#8aab13"/><rect x="2052.35" y="975.0" width="7.3" height="49.0" fill="#8aab13"/><rect x="2063.09" y="975.0" width="7.3" height="49.0" fill="#8aab13"/><rect x="2073.83" y="975.0" width="7.3" height="49.0" fill="#8aab13"/><rect x="2084.57" y="879.8" width="7.3" height="144.2" fill="#8aab13"/><rect x="2095.31" y="975.0" width="7.3" height="49.0" fill="#8aab13"/><rect x="2106.06" y="925.8" width="7.3" height="98.2" fill="#8aab13"/><rect x="2116.80" y="895.9" width="7.3" height="128.1" fill="#8aab13"/><rect x="2127.54" y="975.0" width="7.3" height="49.0" fill="#8aab13"/><rect x="2138.28" y="892.3" width="7.3" height="131.7" fill="#a1bb42"/><rect x="2149.02" y="975.0" width="7.3" height="49.0" fill="#8aab13"/><rect x="2159.77" y="975.0" width="7.3" height="49.0" fill="#8aab13"/><rect x="2170.51" y="975.0" width="7.3" height="49.0" fill="#8aab13"/><rect x="2181.25" y="924.8" width="7.3" height="99.2" fill="#8aab13"/><rect x="2191.99" y="831.4" width="7.3" height="192.6" fill="#8aab13"/><rect x="2202.73" y="843.1" width="7.3" height="180.9" fill="#8aab13"/><rect x="2213.48" y="856.2" width="7.3" height="167.8" fill="#8aab13"/><rect x="2224.22" y="894.7" width="7.3" height="129.3" fill="#8aab13"/><rect x="2234.96" y="866.5" width="7.3" height="157.5" fill="#8aab13"/><rect x="2245.70" y="865.5" width="7.3" height="158.5" fill="#8aab13"/><rect x="2256.44" y="878.6" width="7.3" height="145.4" fill="#8aab13"/><rect x="2267.19" y="975.0" width="7.3" height="49.0" fill="#8aab13"/><rect x="2277.93" y="819.2" width="7.3" height="204.8" fill="#8aab13"/><rect x="2288.67" y="858.0" width="7.3" height="166.0" fill="#8aab13"/><rect x="2299.41" y="956.2" width="7.3" height="67.8" fill="#8aab13"/><rect x="2310.15" y="944.3" width="7.3" height="79.7" fill="#8aab13"/><rect x="2320.90" y="903.0" width="7.3" height="121.0" fill="#8aab13"/><rect x="2331.64" y="927.8" width="7.3" height="96.2" fill="#8aab13"/><rect x="2342.38" y="962.2" width="7.3" height="61.8" fill="#8aab13"/><rect x="2353.12" y="900.6" width="7.3" height="123.4" fill="#8aab13"/><rect x="2363.86" y="844.3" width="7.3" height="179.7" fill="#8aab13"/><rect x="2374.61" y="845.0" width="7.3" height="179.0" fill="#8aab13"/><rect x="2385.35" y="888.9" width="7.3" height="135.1" fill="#8aab13"/><rect x="2396.09" y="912.5" width="7.3" height="111.5" fill="#8aab13"/><rect x="2406.83" y="920.3" width="7.3" height="103.7" fill="#8aab13"/><rect x="2417.57" y="957.8" width="7.3" height="66.2" fill="#8aab13"/><rect x="2428.32" y="872.0" width="7.3" height="152.0" fill="#8aab13"/><rect x="2439.06" y="884.5" width="7.3" height="139.5" fill="#8aab13"/><rect x="2449.80" y="998.1" width="7.3" height="25.9" fill="#8aab13"/><rect x="2460.54" y="971.3" width="7.3" height="52.7" fill="#8aab13"/><rect x="2471.28" y="916.5" width="7.3" height="107.5" fill="#8aab13"/><rect x="2482.03" y="968.3" width="7.3" height="55.7" fill="#8aab13"/><rect x="2492.77" y="923.9" width="7.3" height="100.1" fill="#8aab13"/><rect x="2503.51" y="901.8" width="7.3" height="122.2" fill="#8aab13"/><rect x="2514.25" y="886.3" width="7.3" height="137.7" fill="#8aab13"/><rect x="2524.99" y="910.0" width="7.3" height="114.0" fill="#8aab13"/><rect x="2535.74" y="885.7" width="7.3" height="138.3" fill="#8aab13"/><rect x="2546.48" y="870.3" width="7.3" height="153.7" fill="#8aab13"/><rect x="2557.22" y="938.7" width="7.3" height="85.3" fill="#8aab13"/><rect x="2567.96" y="884.4" width="7.3" height="139.6" fill="#8aab13"/><rect x="2578.70" y="869.7" width="7.3" height="154.3" fill="#8aab13"/><rect x="2589.45" y="910.2" width="7.3" height="113.8" fill="#8aab13"/><rect x="2600.19" y="980.0" width="7.3" height="44.0" fill="#8aab13"/><rect x="2610.93" y="913.5" width="7.3" height="110.5" fill="#8aab13"/><rect x="2621.67" y="900.0" width="7.3" height="124.0" fill="#8aab13"/><rect x="2632.41" y="935.8" width="7.3" height="88.2" fill="#8aab13"/><rect x="2643.16" y="877.6" width="7.3" height="146.4" fill="#8aab13"/><rect x="2653.90" y="979.0" width="7.3" height="45.0" fill="#8aab13"/><rect x="2664.64" y="943.9" width="7.3" height="80.1" fill="#8aab13"/><rect x="2675.38" y="891.5" width="7.3" height="132.5" fill="#8aab13"/><rect x="2686.12" y="955.2" width="7.3" height="68.8" fill="#8aab13"/><rect x="2696.87" y="929.6" width="7.3" height="94.4" fill="#8aab13"/><rect x="2707.61" y="909.2" width="7.3" height="114.8" fill="#8aab13"/><rect x="2718.35" y="873.0" width="7.3" height="151.0" fill="#8aab13"/><rect x="2729.09" y="914.9" width="7.3" height="109.1" fill="#8aab13"/><rect x="2739.83" y="925.2" width="7.3" height="98.8" fill="#8aab13"/><rect x="2750.58" y="910.2" width="7.3" height="113.8" fill="#8aab13"/><rect x="2761.32" y="954.4" width="7.3" height="69.6" fill="#8aab13"/><rect x="2772.06" y="893.1" width="7.3" height="130.9" fill="#8aab13"/><rect x="2782.80" y="920.9" width="7.3" height="103.1" fill="#8aab13"/><rect x="2793.54" y="946.1" width="7.3" height="77.9" fill="#8aab13"/><rect x="2804.29" y="934.4" width="7.3" height="89.6" fill="#8aab13"/><rect x="2815.03" y="911.1" width="7.3" height="112.9" fill="#8aab13"/><rect x="2825.77" y="850.0" width="7.3" height="174.0" fill="#8aab13"/><rect x="2836.51" y="920.5" width="7.3" height="103.5" fill="#8aab13"/><rect x="2847.25" y="947.3" width="7.3" height="76.7" fill="#8aab13"/><rect x="2858.00" y="924.4" width="7.3" height="99.6" fill="#8aab13"/><rect x="2868.74" y="962.6" width="7.3" height="61.4" fill="#8aab13"/><rect x="2879.48" y="913.9" width="7.3" height="110.1" fill="#8aab13"/><rect x="2890.22" y="990.1" width="7.3" height="33.9" fill="#8aab13"/><rect x="2900.96" y="871.3" width="7.3" height="152.7" fill="#8aab13"/><rect x="2911.71" y="820.0" width="7.3" height="204.0" fill="#8aab13"/><rect x="2922.45" y="899.0" width="7.3" height="125.0" fill="#8aab13"/><rect x="2933.19" y="915.9" width="7.3" height="108.1" fill="#8aab13"/><rect x="2943.93" y="868.1" width="7.3" height="155.9" fill="#8aab13"/><rect x="2954.67" y="881.0" width="7.3" height="143.0" fill="#8aab13"/><rect x="2965.42" y="946.9" width="7.3" height="77.1" fill="#8aab13"/><rect x="2976.16" y="957.2" width="7.3" height="66.8" fill="#8aab13"/><rect x="2986.90" y="888.1" width="7.3" height="135.9" fill="#8aab13"/><rect x="2997.64" y="905.2" width="7.3" height="118.8" fill="#8aab13"/><rect x="3008.38" y="928.0" width="7.3" height="96.0" fill="#8aab13"/><rect x="3019.13" y="954.0" width="7.3" height="70.0" fill="#8aab13"/><rect x="3029.87" y="950.3" width="7.3" height="73.7" fill="#8aab13"/><rect x="3040.61" y="933.0" width="7.3" height="91.0" fill="#8aab13"/><rect x="3051.35" y="887.3" width="7.3" height="136.7" fill="#8aab13"/><rect x="3062.09" y="921.5" width="7.3" height="102.5" fill="#8aab13"/><rect x="3072.84" y="890.7" width="7.3" height="133.3" fill="#8aab13"/><rect x="3083.58" y="929.8" width="7.3" height="94.2" fill="#8aab13"/><rect x="3094.32" y="919.1" width="7.3" height="104.9" fill="#8aab13"/><rect x="3105.06" y="861.5" width="7.3" height="162.5" fill="#8aab13"/><rect x="3115.80" y="839.7" width="7.3" height="184.3" fill="#8aab13"/><rect x="3126.55" y="896.7" width="7.3" height="127.3" fill="#8aab13"/><rect x="3137.29" y="927.0" width="7.3" height="97.0" fill="#8aab13"/><rect x="3148.03" y="947.9" width="7.3" height="76.1" fill="#8aab13"/><rect x="3158.77" y="935.8" width="7.3" height="88.2" fill="#8aab13"/><rect x="3169.51" y="873.0" width="7.3" height="151.0" fill="#8aab13"/><rect x="3180.26" y="913.5" width="7.3" height="110.5" fill="#8aab13"/><rect x="3191.00" y="903.5" width="7.3" height="120.5" fill="#8aab13"/><rect x="3201.74" y="868.0" width="7.3" height="156.0" fill="#8aab13"/><rect x="3212.48" y="1017.2" width="7.3" height="6.8" fill="#8aab13"/><rect x="277" y="1024" width="2957" height="2" fill="#6e7079"/><rect x="277.80" y="1024" width="2" height="9.6" fill="#6e7079"/><rect x="460.35" y="1024" width="2" height="9.6" fill="#6e7079"/><rect x="642.90" y="1024" width="2" height="9.6" fill="#6e7079"/><rect x="825.45" y="1024" width="2" height="9.6" fill="#6e7079"/><rect x="1008.00" y="1024" width="2" height="9.6" fill="#6e7079"/><rect x="1190.55" y="1024" width="2" height="9.6" fill="#6e7079"/><rect x="1373.10" y="1024" width="2" height="9.6" fill="#6e7079"/><rect x="1555.65" y="1024" width="2" height="9.6" fill="#6e7079"/><rect x="1738.20" y="1024" width="2" height="9.6" fill="#6e7079"/><rect x="1920.75" y="1024" width="2" height="9.6" fill="#6e7079"/><rect x="2103.30" y="1024" width="2" height="9.6" fill="#6e7079"/><rect x="2285.85" y="1024" width="2" height="9.6" fill="#6e7079"/><rect x="2468.40" y="1024" width="2" height="9.6" fill="#6e7079"/><rect x="2650.95" y="1024" width="2" height="9.6" fill="#6e7079"/><rect x="2833.50" y="1024" width="2" height="9.6" fill="#6e7079"/><rect x="3016.05" y="1024" width="2" height="9.6" fill="#6e7079"/><rect x="3198.60" y="1024" width="2" height="9.6" fill="#6e7079"/><rect x="3232" y="1024" width="2" height="9.6" fill="#6e7079"/></svg>
<div class="t" style="left:216.85px;top:1037.00px;font-size:25.44px;color:#73757d;font-weight:400;transform:scaleX(1.0047);">2021-06-16</div>
<div class="t" style="left:399.40px;top:1037.00px;font-size:25.44px;color:#73757d;font-weight:400;transform:scaleX(1.0047);">2021-07-03</div>
<div class="t" style="left:581.95px;top:1037.00px;font-size:25.44px;color:#73757d;font-weight:400;transform:scaleX(1.0047);">2021-07-20</div>
<div class="t" style="left:764.50px;top:1037.00px;font-size:25.44px;color:#73757d;font-weight:400;transform:scaleX(1.0047);">2021-08-06</div>
<div class="t" style="left:947.05px;top:1037.00px;font-size:25.44px;color:#73757d;font-weight:400;transform:scaleX(1.0047);">2021-08-23</div>
<div class="t" style="left:1129.59px;top:1037.00px;font-size:25.44px;color:#73757d;font-weight:400;transform:scaleX(1.0125);">2021-09-09</div>
<div class="t" style="left:1312.15px;top:1037.00px;font-size:25.44px;color:#73757d;font-weight:400;transform:scaleX(1.0047);">2021-09-26</div>
<div class="t" style="left:1494.70px;top:1037.00px;font-size:25.44px;color:#73757d;font-weight:400;transform:scaleX(1.0047);">2021-10-13</div>
<div class="t" style="left:1677.25px;top:1037.00px;font-size:25.44px;color:#73757d;font-weight:400;transform:scaleX(1.0047);">2021-10-30</div>
<div class="t" style="left:1859.78px;top:1037.00px;font-size:25.44px;color:#73757d;font-weight:400;transform:scaleX(1.0196);">2021-11-16</div>
<div class="t" style="left:2042.35px;top:1037.00px;font-size:25.44px;color:#73757d;font-weight:400;transform:scaleX(1.0047);">2021-12-03</div>
<div class="t" style="left:2224.90px;top:1037.00px;font-size:25.44px;color:#73757d;font-weight:400;transform:scaleX(1.0047);">2021-12-20</div>
<div class="t" style="left:2407.45px;top:1037.00px;font-size:25.44px;color:#73757d;font-weight:400;transform:scaleX(1.0047);">2022-01-06</div>
<div class="t" style="left:2590.00px;top:1037.00px;font-size:25.44px;color:#73757d;font-weight:400;transform:scaleX(1.0047);">2022-01-23</div>
<div class="t" style="left:2772.54px;top:1037.00px;font-size:25.44px;color:#73757d;font-weight:400;transform:scaleX(1.0125);">2022-02-09</div>
<div class="t" style="left:2955.10px;top:1037.00px;font-size:25.44px;color:#73757d;font-weight:400;transform:scaleX(1.0047);">2022-02-26</div>
<div class="t" style="left:3137.65px;top:1037.00px;font-size:25.44px;color:#73757d;font-weight:400;transform:scaleX(1.0047);">2022-03-15</div>
<div style="position:absolute;left:208.00px;top:1030.00px;width:20.00px;height:40.00px;background:#ffffff;"></div>
<div style="position:absolute;left:1984px;top:928px;width:313px;height:128px;background:#fff;border-radius:9px;box-shadow:0 3px 14px rgba(0,0,0,0.20);"></div>
<div class="t" style="left:2004.83px;top:953.50px;font-size:30.09px;color:#666;font-weight:400;-webkit-text-stroke:0.25px #666;transform:scaleX(1.0869);">December 6, 2021</div>
<div style="position:absolute;left:2006.00px;top:1002.00px;width:18.00px;height:17.70px;background:#8aab13;"></div>
<div class="t" style="left:2034.00px;top:995.70px;font-size:28.63px;color:#666;font-weight:400;transform:scaleX(0.9967);">32h18m07s</div>
<div class="t" style="left:289.91px;top:1155.40px;font-size:38.66px;color:#444;font-weight:400;-webkit-text-stroke:0.7px #444;transform:scaleX(1.0886);">Comparison by workplace</div>
<div class="t" style="left:1046.30px;top:1155.40px;font-size:38.66px;color:#444;font-weight:400;-webkit-text-stroke:0.7px #444;transform:scaleX(1.1016);">Comparison by order type</div>
<div class="t" style="left:1802.22px;top:1155.40px;font-size:38.66px;color:#444;font-weight:400;-webkit-text-stroke:0.7px #444;transform:scaleX(1.0837);">Comparison by employee</div>
<div class="t" style="left:2557.70px;top:1155.40px;font-size:38.66px;color:#444;font-weight:400;-webkit-text-stroke:0.7px #444;transform:scaleX(1.1015);">Comparison by duration</div>
<div style="position:absolute;left:280.00px;top:1213.30px;width:692.00px;height:49.50px;background:#8aab13;"></div>
<div class="t" style="left:291.00px;top:1217.80px;font-size:33.43px;color:#363636;font-weight:400;transform:scaleX(1.0416);">Arburg 200-3x</div>
<div style="position:absolute;left:280.00px;top:1273.30px;width:662.00px;height:49.50px;background:#8aab13;"></div>
<div class="t" style="left:291.00px;top:1277.80px;font-size:33.43px;color:#363636;font-weight:400;transform:scaleX(1.0290);">Trumpf Trulaser 2000</div>
<div style="position:absolute;left:280.00px;top:1333.30px;width:634.20px;height:49.50px;background:#8aab13;"></div>
<div class="t" style="left:289.01px;top:1337.80px;font-size:33.43px;color:#363636;font-weight:400;transform:scaleX(0.9943);">Engel E-mac 50-01</div>
<div style="position:absolute;left:280.00px;top:1393.30px;width:633.00px;height:49.50px;background:#8aab13;"></div>
<div class="t" style="left:289.06px;top:1397.80px;font-size:33.43px;color:#363636;font-weight:400;transform:scaleX(0.9694);">Bruska</div>
<div style="position:absolute;left:280.00px;top:1453.30px;width:627.80px;height:49.50px;background:#8aab13;"></div>
<div class="t" style="left:290.00px;top:1457.80px;font-size:33.43px;color:#363636;font-weight:400;transform:scaleX(1.0041);">Chiron 28-S-2</div>
<div style="position:absolute;left:280.00px;top:1513.30px;width:626.00px;height:49.50px;background:#8aab13;"></div>
<div class="t" style="left:288.97px;top:1517.80px;font-size:33.43px;color:#363636;font-weight:400;transform:scaleX(1.0159);">Engel E-mac 50-02</div>
<div style="position:absolute;left:280.00px;top:1573.30px;width:620.40px;height:49.50px;background:#8aab13;"></div>
<div class="t" style="left:289.01px;top:1577.80px;font-size:33.43px;color:#363636;font-weight:400;transform:scaleX(0.9933);">Engel E-mac 280</div>
<div style="position:absolute;left:280.00px;top:1633.30px;width:607.20px;height:49.50px;background:#8aab13;"></div>
<div class="t" style="left:288.98px;top:1637.80px;font-size:33.43px;color:#363636;font-weight:400;transform:scaleX(1.0123);">Engel E-mac 50-03</div>
<div style="position:absolute;left:280.00px;top:1693.30px;width:603.80px;height:49.50px;background:#8aab13;"></div>
<div class="t" style="left:289.01px;top:1697.80px;font-size:33.43px;color:#363636;font-weight:400;transform:scaleX(0.9941);">LASERTEC 50 PrecisionTool</div>
<div style="position:absolute;left:280.00px;top:1753.30px;width:598.60px;height:49.50px;background:#8aab13;"></div>
<div class="t" style="left:289.00px;top:1757.80px;font-size:33.43px;color:#363636;font-weight:400;transform:scaleX(1.0008);">Mazak HCR5000</div>
<div style="position:absolute;left:280.00px;top:1813.30px;width:598.00px;height:49.50px;background:#8aab13;"></div>
<div class="t" style="left:288.97px;top:1817.80px;font-size:33.43px;color:#363636;font-weight:400;transform:scaleX(1.0131);">Mazak CV5-500-B</div>
<div style="position:absolute;left:280.00px;top:1873.30px;width:591.70px;height:49.50px;background:#8aab13;"></div>
<div class="t" style="left:289.00px;top:1877.80px;font-size:33.43px;color:#363636;font-weight:400;transform:scaleX(0.9993);">Engel E-victory 120</div>
<div style="position:absolute;left:280.00px;top:1933.30px;width:590.00px;height:49.50px;background:#8aab13;"></div>
<div class="t" style="left:290.04px;top:1937.80px;font-size:33.43px;color:#363636;font-weight:400;transform:scaleX(0.9582);">Chiron F216S</div>
<div style="position:absolute;left:280.00px;top:1993.30px;width:588.30px;height:49.50px;background:#8aab13;"></div>
<div class="t" style="left:288.98px;top:1997.80px;font-size:33.43px;color:#363636;font-weight:400;transform:scaleX(1.0097);">Mazak CV5-500-A</div>
<div style="position:absolute;left:280.00px;top:2053.30px;width:551.70px;height:49.50px;background:#8aab13;"></div>
<div class="t" style="left:289.15px;top:2057.80px;font-size:33.43px;color:#363636;font-weight:400;transform:scaleX(0.9235);">Pila</div>
<div style="position:absolute;left:280.00px;top:2113.30px;width:528.80px;height:49.50px;background:#8aab13;"></div>
<div class="t" style="left:288.97px;top:2117.80px;font-size:33.43px;color:#363636;font-weight:400;transform:scaleX(1.0135);">Krauss Maffei MX 500</div>
<div style="position:absolute;left:1036.00px;top:1213.30px;width:692.00px;height:49.50px;background:#8aab13;"></div>
<div class="t" style="left:1047.00px;top:1217.80px;font-size:33.43px;color:#363636;font-weight:400;transform:scaleX(1.0501);">VZ3000</div>
<div style="position:absolute;left:1036.00px;top:1273.30px;width:679.00px;height:49.50px;background:#8aab13;"></div>
<div class="t" style="left:1047.00px;top:1277.80px;font-size:33.43px;color:#363636;font-weight:400;transform:scaleX(1.0578);">VZ4000</div>
<div style="position:absolute;left:1036.00px;top:1333.30px;width:658.80px;height:49.50px;background:#8aab13;"></div>
<div class="t" style="left:1047.00px;top:1337.80px;font-size:33.43px;color:#363636;font-weight:400;transform:scaleX(0.9466);">VZ12001</div>
<div style="position:absolute;left:1036.00px;top:1393.30px;width:650.20px;height:49.50px;background:#8aab13;"></div>
<div class="t" style="left:1047.00px;top:1397.80px;font-size:33.43px;color:#363636;font-weight:400;transform:scaleX(1.0020);">VZ1000</div>
<div style="position:absolute;left:1036.00px;top:1453.30px;width:649.00px;height:49.50px;background:#8aab13;"></div>
<div class="t" style="left:1047.00px;top:1457.80px;font-size:33.43px;color:#363636;font-weight:400;transform:scaleX(1.0561);">VZ5000</div>
<div style="position:absolute;left:1036.00px;top:1513.30px;width:642.00px;height:49.50px;background:#8aab13;"></div>
<div class="t" style="left:1047.00px;top:1517.80px;font-size:33.43px;color:#363636;font-weight:400;transform:scaleX(1.0561);">VZ6000</div>
<div style="position:absolute;left:1036.00px;top:1573.30px;width:618.70px;height:49.50px;background:#8aab13;"></div>
<div class="t" style="left:1047.00px;top:1577.80px;font-size:33.43px;color:#363636;font-weight:400;transform:scaleX(1.0561);">VZ2000</div>
<div style="position:absolute;left:1036.00px;top:1633.30px;width:138.40px;height:49.50px;background:#8aab13;"></div>
<div class="t" style="left:1047.00px;top:1637.80px;font-size:33.43px;color:#363636;font-weight:400;transform:scaleX(0.9971);">VZ923456</div>
<div style="position:absolute;left:1792.00px;top:1213.30px;width:692.00px;height:49.50px;background:#8aab13;"></div>
<div class="t" style="left:1801.00px;top:1217.80px;font-size:33.43px;color:#363636;font-weight:400;transform:scaleX(1.0010);">Donald Dub</div>
<div style="position:absolute;left:1792.00px;top:1273.30px;width:673.00px;height:49.50px;background:#8aab13;"></div>
<div class="t" style="left:1801.01px;top:1277.80px;font-size:33.43px;color:#363636;font-weight:400;transform:scaleX(0.9958);">Bernhard Buk</div>
<div style="position:absolute;left:1792.00px;top:1333.30px;width:258.50px;height:49.50px;background:#8aab13;"></div>
<div class="t" style="left:1800.99px;top:1337.80px;font-size:33.43px;color:#363636;font-weight:400;transform:scaleX(1.0033);">Petr Beran</div>
<div style="position:absolute;left:1792.00px;top:1393.30px;width:111.60px;height:49.50px;background:#8aab13;"></div>
<div class="t" style="left:1802.01px;top:1397.80px;font-size:33.43px;color:#363636;font-weight:400;transform:scaleX(0.9865);">Sven-Olov Faldt</div>
<div style="position:absolute;left:1792.00px;top:1453.30px;width:37.90px;height:49.50px;background:#8aab13;"></div>
<div class="t" style="left:1801.98px;top:1457.80px;font-size:33.43px;color:#363636;font-weight:400;transform:scaleX(1.0228);">Ondřej Antonín</div>
<div style="position:absolute;left:1792.00px;top:1513.30px;width:32.80px;height:49.50px;background:#8aab13;"></div>
<div class="t" style="left:1801.00px;top:1517.80px;font-size:33.43px;color:#363636;font-weight:400;transform:scaleX(0.9993);">Rowan Easter-Robinson</div>
<div style="position:absolute;left:1792.00px;top:1573.30px;width:24.60px;height:49.50px;background:#8aab13;"></div>
<div class="t" style="left:1802.04px;top:1577.80px;font-size:33.43px;color:#363636;font-weight:400;transform:scaleX(0.9588);">Stanislav Bureš</div>
<div style="position:absolute;left:1792.00px;top:1633.30px;width:14.00px;height:49.50px;background:#8aab13;"></div>
<div class="t" style="left:1801.02px;top:1637.80px;font-size:33.43px;color:#363636;font-weight:400;transform:scaleX(0.9886);">Dalibor Bosák</div>
<div style="position:absolute;left:2548.00px;top:1213.30px;width:692.00px;height:49.50px;background:#8aab13;"></div>
<div class="t" style="left:2557.99px;top:1217.80px;font-size:33.43px;color:#363636;font-weight:400;transform:scaleX(1.0145);">2h&lt;4h</div>
<div style="position:absolute;left:2548.00px;top:1273.30px;width:494.70px;height:49.50px;background:#8aab13;"></div>
<div class="t" style="left:2559.00px;top:1277.80px;font-size:33.43px;color:#363636;font-weight:400;transform:scaleX(1.0035);">4h&lt;8h</div>
<div style="position:absolute;left:2548.00px;top:1333.30px;width:356.00px;height:49.50px;background:#8aab13;"></div>
<div class="t" style="left:2557.09px;top:1337.80px;font-size:33.43px;color:#363636;font-weight:400;transform:scaleX(0.9559);">1h&lt;2h</div>
<div style="position:absolute;left:2548.00px;top:1393.30px;width:243.80px;height:49.50px;background:#8aab13;"></div>
<div class="t" style="left:2557.94px;top:1397.80px;font-size:33.43px;color:#363636;font-weight:400;transform:scaleX(1.0620);">30m&lt;60m</div>
<div style="position:absolute;left:2548.00px;top:1453.30px;width:83.20px;height:49.50px;background:#8aab13;"></div>
<div class="t" style="left:2558.04px;top:1457.80px;font-size:33.43px;color:#363636;font-weight:400;transform:scaleX(0.9621);">8h&lt;16h</div>
<div class="t" style="left:2558.02px;top:1517.80px;font-size:33.43px;color:#363636;font-weight:400;transform:scaleX(0.9819);">5m&lt;15m</div>
<div class="t" style="left:2557.95px;top:1577.80px;font-size:33.43px;color:#363636;font-weight:400;transform:scaleX(1.0517);">0m&lt;5m</div></div></body></html>
